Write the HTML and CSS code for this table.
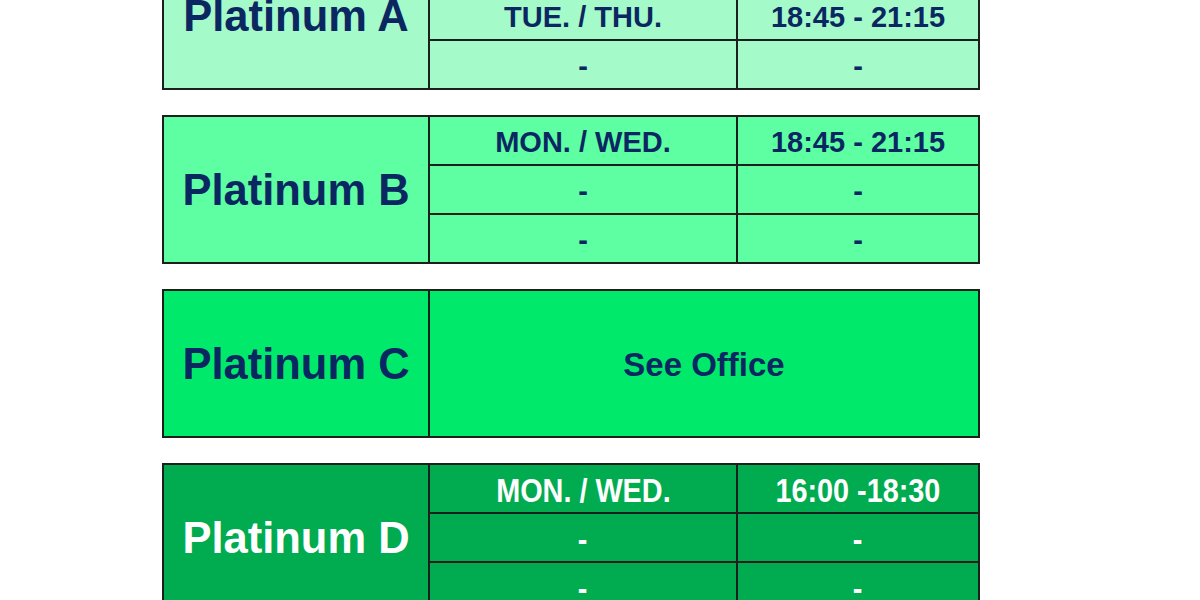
FILE: index.html
```html
<!DOCTYPE html>
<html lang="en">
  <head>
    <meta charset="UTF-8" />
    <title>Platinum Classes</title>
    <link rel="stylesheet" href="styles.css">
  </head>
  <body>
    <div class="schedule">
      <div class="level level-a">
        <div class="level-name">Platinum A</div>
        <div class="cell">MON. / WED.</div>
        <div class="cell">18:45 - 21:15</div>
        <div class="cell">TUE. / THU.</div>
        <div class="cell">18:45 - 21:15</div>
        <div class="cell">-</div>
        <div class="cell">-</div>
      </div>

      <div class="level level-b">
        <div class="level-name">Platinum B</div>
        <div class="cell">MON. / WED.</div>
        <div class="cell">18:45 - 21:15</div>
        <div class="cell">-</div>
        <div class="cell">-</div>
        <div class="cell">-</div>
        <div class="cell">-</div>
      </div>

      <div class="level level-c">
        <div class="level-name">Platinum C</div>
        <div class="cell cell-wide">See Office</div>
      </div>

      <div class="level level-d">
        <div class="level-name">Platinum D</div>
        <div class="cell"><span class="narrow">MON. / WED.</span></div>
        <div class="cell"><span class="narrow">16:00 -18:30</span></div>
        <div class="cell"><span class="narrow">-</span></div>
        <div class="cell"><span class="narrow">-</span></div>
        <div class="cell"><span class="narrow">-</span></div>
        <div class="cell"><span class="narrow">-</span></div>
      </div>
    </div>
  </body>
</html>
```

FILE: styles.css
```css
body {
  margin: 0;
  background: #ffffff;
  font-family: "Liberation Sans", Arial, sans-serif;
  font-weight: bold;
}

.schedule {
  display: flex;
  flex-direction: column;
  gap: 25px;
  width: 818px;
  margin: -59px 0 0 162px;
}

.level {
  display: grid;
  grid-template-columns: 264px 306px 240px;
  grid-template-rows: repeat(3, 47px);
  gap: 2px;
  padding: 2px;
  background: #1c1f1c;
  color: #0b2762;
}

.level-name {
  grid-row: 1 / 4;
  display: flex;
  align-items: center;
  justify-content: center;
  font-size: 43.5px;
  padding-top: 2px;
}

.cell {
  display: flex;
  align-items: center;
  justify-content: center;
  font-size: 29px;
  padding-top: 3px;
}

.cell-wide {
  grid-column: 2 / 4;
  grid-row: 1 / 4;
  font-size: 33px;
}

.narrow {
  display: inline-block;
  font-size: 33.5px;
  transform: scaleX(0.86);
  padding-top: 1px;
}

.level-a .level-name,
.level-a .cell {
  background: #a4fac8;
}

.level-b .level-name,
.level-b .cell {
  background: #5efea3;
}

.level-c .level-name,
.level-c .cell {
  background: #00e96a;
}

.level-d {
  color: #ffffff;
}

.level-d .level-name,
.level-d .cell {
  background: #00ac4f;
}
```
